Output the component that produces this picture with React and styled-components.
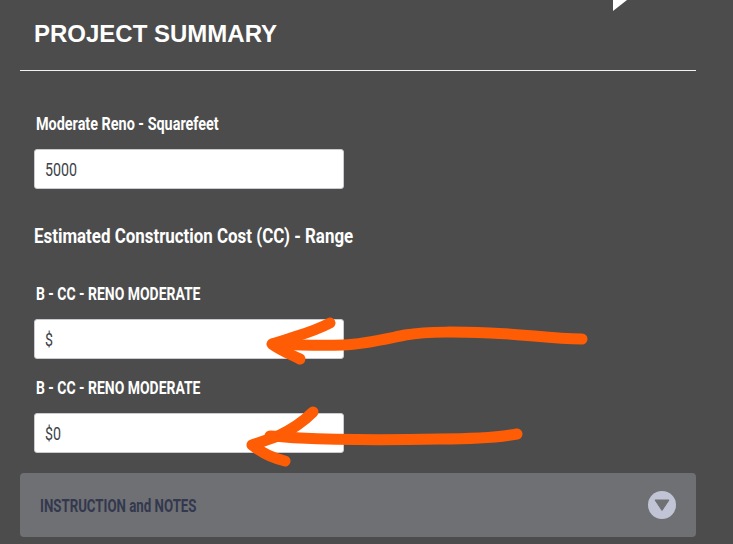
import React from 'react';
import styled, { createGlobalStyle } from 'styled-components';

const GlobalStyle = createGlobalStyle`
  html, body {
    margin: 0;
    padding: 0;
    background: #4c4c4c;
  }
`;

const condensed = `"Roboto", "Liberation Sans", sans-serif`;

const Page = styled.div`
  position: relative;
  width: 733px;
  height: 544px;
  overflow: hidden;
  background: #4c4c4c;
  padding: 0 37px 0 20px;
  box-sizing: border-box;
`;

const Header = styled.div`
  height: 71px;
  padding: 0 14px;
  box-sizing: border-box;
  border-bottom: 1px solid #f2f2f2;
`;

const Title = styled.h1`
  margin: 0;
  padding-top: 20px;
  font: bold 24px/28px "Liberation Sans", Arial, sans-serif;
  color: #fff;
`;

const Form = styled.div`
  padding: 42px 14px 0;
  display: flex;
  flex-direction: column;
  width: 310px;
`;

// no condensed face is installed, so the narrow look comes from squeezing the text
const Squeezed = styled.span`
  display: inline-block;
  white-space: nowrap;
  transform: scaleX(${(p) => p.$x});
  transform-origin: left center;
`;

const Label = styled.label`
  display: block;
  margin: ${(p) => p.$top || 0}px 0 15px 2px;
  font: bold 18px/21px ${condensed};
  color: #fff;
`;

const Field = styled.div`
  height: 40px;
  box-sizing: border-box;
  padding: 0 10px;
  border: 1px solid #c9cbd0;
  border-radius: 3px;
  background: #fff;
  font: 18px/40px ${condensed};
  color: #3c3f48;
`;

const SectionTitle = styled.h2`
  margin: 35px 0 35px;
  font: bold 21px/24px ${condensed};
  color: #fff;
`;

const Accordion = styled.div`
  margin-top: 20px;
  height: 64px;
  box-sizing: border-box;
  padding: 0 20px;
  border-radius: 4px;
  background: #6f7073;
  display: flex;
  align-items: center;
  justify-content: space-between;
`;

const AccordionTitle = styled.span`
  padding-top: 1px;
  font: bold 18px/20px ${condensed};
  color: #33384f;
`;

const Toggle = styled.span`
  width: 28px;
  height: 28px;
  border-radius: 50%;
  background: #c0c4d4;
  display: flex;
  align-items: center;
  justify-content: center;
`;

const Overlay = styled.svg`
  position: absolute;
  left: 0;
  top: 0;
  pointer-events: none;
`;

const Stroke = styled.path`
  fill: none;
  stroke: #ff5d05;
  stroke-width: 11;
  stroke-linecap: round;
  stroke-linejoin: round;
`;

export default function App() {
  return (
    <Page>
      <GlobalStyle />
      <Header>
        <Title>PROJECT SUMMARY</Title>
      </Header>
      <Form>
        <Label><Squeezed $x={0.8}>Moderate Reno - Squarefeet</Squeezed></Label>
        <Field><Squeezed $x={0.79}>5000</Squeezed></Field>
        <SectionTitle><Squeezed $x={0.805}>Estimated Construction Cost (CC) - Range</Squeezed></SectionTitle>
        <Label><Squeezed $x={0.775}>B - CC - RENO MODERATE</Squeezed></Label>
        <Field><Squeezed $x={0.79}>$</Squeezed></Field>
        <Label $top={18}><Squeezed $x={0.775}>B - CC - RENO MODERATE</Squeezed></Label>
        <Field><Squeezed $x={0.79}>$0</Squeezed></Field>
      </Form>
      <Accordion>
        <AccordionTitle><Squeezed $x={0.737}>INSTRUCTION and NOTES</Squeezed></AccordionTitle>
        <Toggle>
          <svg width="16" height="12" viewBox="0 0 16 12">
            <path d="M1 1H15L8 11.5Z" fill="#6f7073" stroke="#6f7073" strokeLinejoin="round" />
          </svg>
        </Toggle>
      </Accordion>
      <Overlay width="733" height="544" viewBox="0 0 733 544">
        <polygon points="613,0 627,0 613,11" fill="#fff" />
        <Stroke d="M582 339C550 339 525 334 490 333C460 332 430 331 405 335C385 339 365 344 343 345C320 346 295 345 273 344" />
        <Stroke d="M330 323C315 331 300 335 285 340L272 344C280 350 290 354 300 359" />
        <Stroke d="M517 434C495 438 470 439 440 439C390 440 340 440 300 438C285 437 275 436 270 436" />
        <Stroke d="M313 412C303 422 293 429 278 436L252 445C262 453 272 458 285 461" />
      </Overlay>
    </Page>
  );
}
